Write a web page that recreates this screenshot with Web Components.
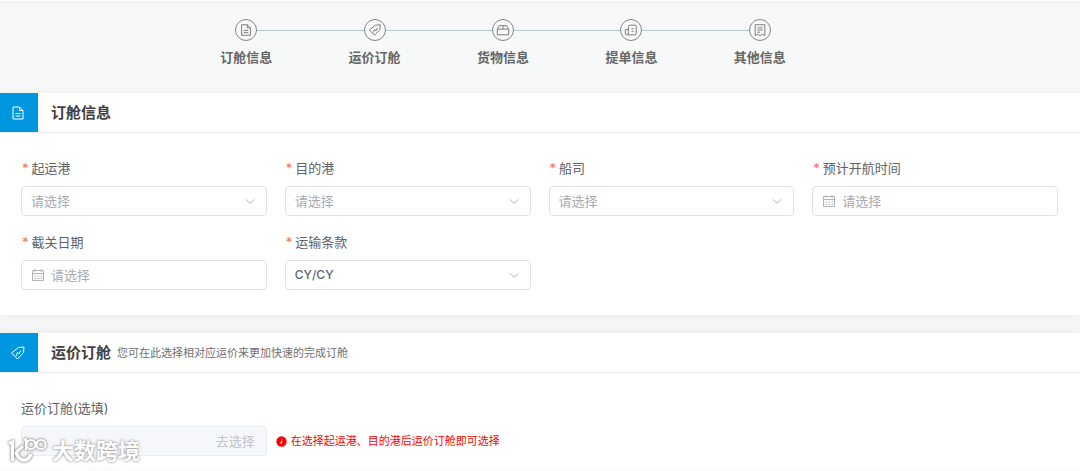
<!DOCTYPE html>
<html lang="zh-CN">
<head>
<meta charset="utf-8">
<meta name="viewport" content="width=device-width, initial-scale=1">
<title>订舱信息</title>
<style>
  body { margin: 0; background: #fbfcfc; color: #606266; font: 13px/18px Inter, "Noto Sans CJK SC", sans-serif; }
</style>
</head>
<body>
<booking-page></booking-page>

<script>
const ICONS = {
  doc: '<path d="M3 2h6.500l3.500 3.500V14H3zM9.500 2v3.500H13M5.500 8.500h5M5.500 11h5"/>',
  tag: '<path d="M8.500 2.500L14 2l-.5 5.500L7.500 14 1.500 8zM6 11l1.500-3.500 1.200 1.500L11 5.500"/>',
  box: '<path d="M1.500 7h13v6.500h-13zM1.500 7l2.500-4h8l2.500 4M8 3v4"/>',
  bill: '<path d="M5 13.500V4q0-1.500 1.500-1.500H13q1 0 1 1V12q0 1.500-1.500 1.500H3q-1.500 0-1.500-1.500V7.500H5M8.500 6.500H11M8.500 9.500H11"/>',
  note: '<path d="M2.500 2h11v12.500l-2.700-1.700L8 14.500l-2.800-1.700-2.700 1.700zM5 5.500h6M5 8h6M5 10.500h3"/>',
  calendar: '<path d="M2.500 3.500h11v10h-11zM2.500 6.500h11M5 2v3M11 2v3"/><path d="M4.500 9h7.500M4.500 11.500h7.500" stroke-dasharray="1.500 1.500"/>',
  chevron: '<path d="M3 6l5 4.500L13 6"/>',
  info: '<circle cx="8" cy="8" r="7.500" fill="currentColor" stroke="none"/><path d="M8.300 7l-1 4.500M8.900 4.200l-.1.600" stroke="#fff" stroke-width="2"/>'
};

function define(name, build) {
  customElements.define(name, class extends HTMLElement {
    connectedCallback() {
      if (this.shadowRoot) return;
      this.attachShadow({ mode: 'open' }).innerHTML = build(this);
    }
  });
}

define('ui-icon', el => `
  <style>
    :host { display: block; flex: none; width: 16px; height: 16px; }
    svg { display: block; width: 100%; height: 100%; fill: none; stroke: currentColor; stroke-linejoin: round; }
  </style>
  <svg viewBox="0 0 16 16" aria-hidden="true">${ICONS[el.getAttribute('name')]}</svg>`);

define('booking-step', el => `
  <style>
    :host { display: flex; flex-direction: column; align-items: center; gap: 7px; }
    .track { display: flex; align-items: center; align-self: stretch; }
    .track::before, .track::after { content: ""; flex: 1; height: 1px; background: #b9c4cd; }
    :host(:first-child) .track::before, :host(:last-child) .track::after { background: none; }
    .dot { display: grid; place-items: center; width: 20px; height: 20px; border: 1px solid #858585; border-radius: 50%; color: #6b6b6b; }
    ui-icon { width: 14px; height: 14px; }
    .name { font-weight: 700; color: #666; }
  </style>
  <div class="track"><div class="dot"><ui-icon name="${el.getAttribute('icon')}"></ui-icon></div></div>
  <div class="name"><slot></slot></div>`);

define('booking-steps', () => `
  <style>
    :host { display: block; padding: 18px 256px 27px 182px; border-top: 1px solid #fff; background: linear-gradient(#f1f3f3, #f7f9f9 8px); }
    nav { display: grid; grid-template-columns: repeat(5, 1fr); }
  </style>
  <nav aria-label="订舱步骤"><slot></slot></nav>`);

define('form-section', el => `
  <style>
    :host { display: block; background: #fff; box-shadow: 0 0 10px rgba(0, 0, 0, .06); }
    header { display: flex; align-items: center; height: 39px; border-bottom: 1px solid #ebeeee; }
    .badge { display: grid; place-items: center; align-self: stretch; width: 38px; background: #0096e0; color: #fff; }
    .badge ui-icon { width: 16px; height: 16px; margin-right: 2px; }
    h2 { margin: 0 6px 0 13px; font-size: 15px; line-height: 20px; font-weight: 700; color: #404040; }
    small { font-size: 11px; line-height: 16px; color: #707070; }
    .body { padding: 26px 22px 0 21px; }
  </style>
  <header>
    <div class="badge"><ui-icon name="${el.getAttribute('icon')}"></ui-icon></div>
    <h2>${el.getAttribute('heading')}</h2>
    <small>${el.getAttribute('hint') || ''}</small>
  </header>
  <div class="body"><slot></slot></div>`);

define('field-grid', () => `
  <style>
    :host { display: grid; grid-template-columns: repeat(4, 1fr); gap: 17px 18px; }
  </style>
  <slot></slot>`);

define('field-row', () => `
  <style>
    :host { display: flex; gap: 9px; }
    ::slotted(form-field) { flex: none; width: calc((100% - 54px) / 4); }
  </style>
  <slot></slot>`);

define('form-field', el => {
  const type = el.getAttribute('type');
  const value = el.getAttribute('value');
  const controls = {
    select: `<select id="c" class="${value ? 'filled' : ''}"><option>${value || '请选择'}</option></select><ui-icon class="chevron" name="chevron"></ui-icon>`,
    date: `<ui-icon class="calendar" name="calendar"></ui-icon><input id="c" type="text" placeholder="请选择">`,
    pick: `<input id="c" type="text" disabled><button type="button" disabled>去选择</button>`
  };
  return `
  <style>
    :host { display: flex; flex-direction: column; gap: 9px; min-width: 0; }
    label { color: #606266; }
    label.required { padding-left: 1px; }
    label.required::before { content: "*"; margin-right: 3px; color: #f56c6c; }
    .box { display: flex; align-items: center; box-sizing: border-box; height: 30px; padding: 0 9px; border: 1px solid #dfe3e6; border-radius: 4px; background: #fff; }
    .box.pick { padding-right: 11px; background: #f5f7fa; border-color: #e8ebf0; }
    select, input, button { margin: 0; padding: 0; border: 0; outline: 0; background: none; font: inherit; color: #a8abb2; appearance: none; }
    select, input { flex: 1; min-width: 0; height: 28px; }
    select.filled { font-size: 12px; font-weight: 500; color: #606266; }
    input { color: #606266; }
    input::placeholder { color: #a8abb2; opacity: 1; }
    button { color: #c0c4cc; }
    .chevron { width: 14px; height: 14px; color: #a8abb2; }
    .calendar { margin-right: 5px; margin-left: -1px; color: #b0b3b8; }
  </style>
  <label for="c" class="${el.hasAttribute('required') ? 'required' : ''}">${el.getAttribute('label')}</label>
  <div class="box ${type}">${controls[type]}</div>`;
});

define('form-notice', () => `
  <style>
    :host { display: flex; align-items: center; align-self: end; gap: 4px; height: 30px; font-size: 11px; line-height: 16px; color: #f00; white-space: nowrap; }
    ui-icon { width: 11px; height: 11px; }
  </style>
  <ui-icon name="info"></ui-icon><span><slot></slot></span>`);

define('brand-mark', () => `
  <style>
    :host { display: flex; align-items: center; gap: 4px; color: #fff; font-size: 22px; line-height: 28px; font-weight: 700; text-shadow: 0 0 2px #999, 0 0 3px #aaa; pointer-events: none; }
    svg { display: block; width: 40px; height: 28px; fill: none; stroke: #fff; filter: drop-shadow(0 0 1px #999) drop-shadow(0 0 1px #aaa); }
  </style>
  <svg viewBox="0 0 40 28" aria-hidden="true">
    <path d="M1 6.500L4.500 5V24M15 9l-7 6.500" stroke-width="3"/>
    <path d="M8 15q3 9 9 8 5-1 5.500-6" stroke-width="3.500"/>
    <path d="M16 3l2-1v11" stroke-width="2"/>
    <circle cx="23" cy="7.500" r="4.500" stroke-width="2"/>
    <circle cx="33" cy="7.500" r="4.500" stroke-width="2"/>
  </svg>
  <span>大数跨境</span>`);

define('booking-page', () => `
  <style>
    :host { display: block; position: relative; }
    main { display: grid; gap: 18px; background: #f5f7f7; }
    .booking { padding-bottom: 25px; }
    .price { padding-bottom: 11px; }
    brand-mark { position: absolute; left: 8px; bottom: 2px; }
  </style>
  <booking-steps>
    <booking-step icon="doc">订舱信息</booking-step>
    <booking-step icon="tag">运价订舱</booking-step>
    <booking-step icon="box">货物信息</booking-step>
    <booking-step icon="bill">提单信息</booking-step>
    <booking-step icon="note">其他信息</booking-step>
  </booking-steps>
  <main>
    <form-section class="booking" icon="doc" heading="订舱信息">
      <field-grid>
        <form-field required type="select" label="起运港"></form-field>
        <form-field required type="select" label="目的港"></form-field>
        <form-field required type="select" label="船司"></form-field>
        <form-field required type="date" label="预计开航时间"></form-field>
        <form-field required type="date" label="截关日期"></form-field>
        <form-field required type="select" label="运输条款" value="CY/CY"></form-field>
      </field-grid>
    </form-section>
    <form-section class="price" icon="tag" heading="运价订舱" hint="您可在此选择相对应运价来更加快速的完成订舱">
      <field-row>
        <form-field type="pick" label="运价订舱(选填)"></form-field>
        <form-notice>在选择起运港、目的港后运价订舱即可选择</form-notice>
      </field-row>
    </form-section>
  </main>
  <brand-mark></brand-mark>`);
</script>
</body>
</html>
